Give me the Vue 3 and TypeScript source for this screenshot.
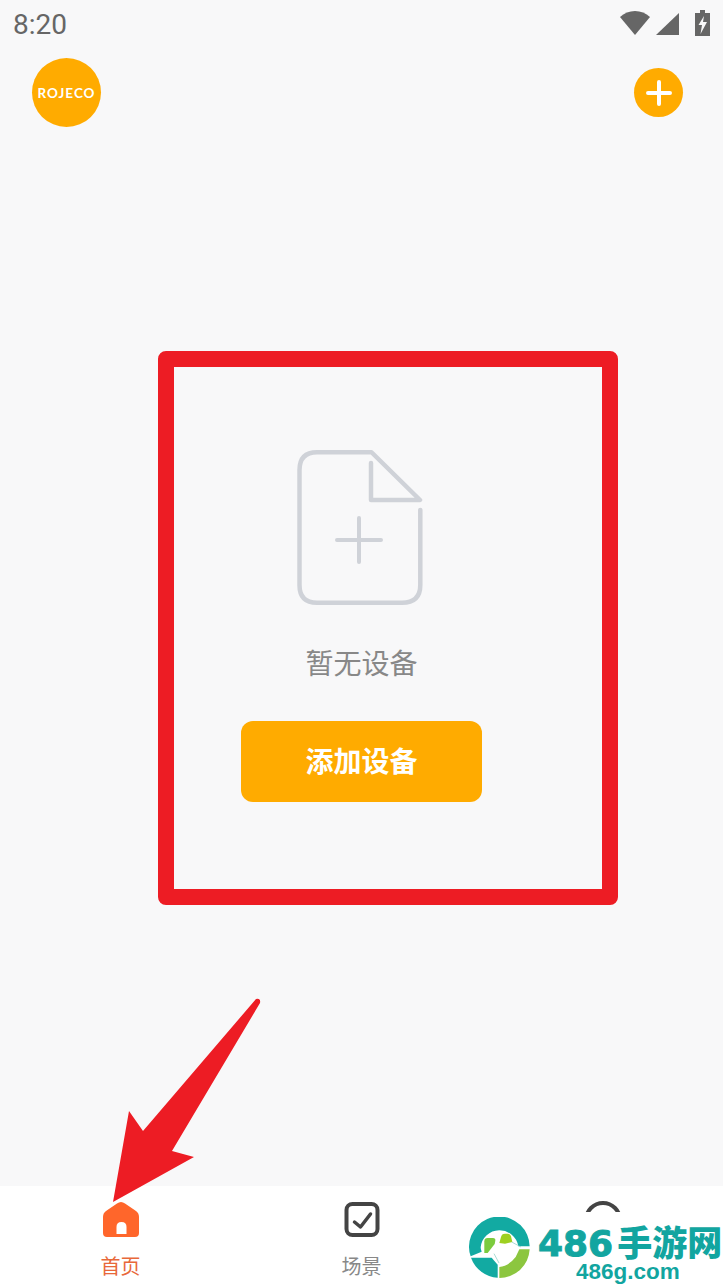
<template>
  <div class="page">
    <div class="status-bar">
      <span class="time">8:20</span>
      <div class="status-icons">
        <svg width="30" height="24" viewBox="0 0 30 24">
          <path d="M0 6 C8 -2 22 -2 30 6 L15 24 Z" fill="#666" />
        </svg>
        <svg width="23" height="22" viewBox="0 0 23 22">
          <path d="M23 0 V22 H0 Z" fill="#666" />
        </svg>
        <svg width="15" height="26" viewBox="0 0 15 26">
          <path d="M5 0 H10 V3 H15 V26 H0 V3 H5 Z M9 6 L3.500 15 H7 L5.500 24 L12 12 H8 Z" fill="#666" fill-rule="evenodd" />
        </svg>
      </div>
    </div>

    <header class="top-bar">
      <div class="logo">ROJECO</div>
      <button class="add-round">
        <svg width="26" height="26" viewBox="0 0 26 26">
          <path d="M13 2 V24 M2 13 H24" stroke="#fff" stroke-width="4" stroke-linecap="round" />
        </svg>
      </button>
    </header>

    <main class="content">
      <svg class="empty-icon" width="133" height="160" viewBox="0 0 133 160" fill="none">
        <path
          d="M125.300 62 V137 Q125.300 154.750 107 154.750 H22 Q4.500 154.750 4.500 137 V22 Q4.500 4.250 22 4.250 H76.500 L125 52 H76 V15"
          stroke="#cfd2d8"
          stroke-width="4.500"
          stroke-linecap="round"
          stroke-linejoin="round"
        />
        <path d="M42 92 H86 M64 70 V114" stroke="#cfd2d8" stroke-width="4" stroke-linecap="round" />
      </svg>
      <p class="empty-text">暂无设备</p>
      <button class="add-btn">添加设备</button>
    </main>

    <nav class="tab-bar">
      <div v-for="tab in tabs" :key="tab.icon" class="tab" :class="{ active: tab.active }">
        <svg width="40" height="40" viewBox="0 0 40 40">
          <template v-if="tab.icon === 'home'">
            <path
              d="M20 2 Q22 2 24 3.500 L35 11 Q38 13 38 17 V33 Q38 37 34 37 H6 Q2 37 2 33 V17 Q2 13 5 11 L16 3.500 Q18 2 20 2 Z"
              fill="#ff662b"
            />
            <path d="M15.500 34 V27 Q15.500 22 20.500 22 Q25.500 22 25.500 27 V34 Z" fill="#fff" />
          </template>
          <template v-else-if="tab.icon === 'check'">
            <rect x="4.500" y="4" width="31" height="31" rx="6" fill="none" stroke="#444" stroke-width="4" />
            <path d="M12.500 22 L18.500 27 L28.500 14" fill="none" stroke="#444" stroke-width="3.500" stroke-linecap="round" stroke-linejoin="round" />
          </template>
          <template v-else>
            <circle cx="20" cy="20" r="17" fill="none" stroke="#444" stroke-width="4" />
          </template>
        </svg>
        <span v-if="tab.label" class="tab-label">{{ tab.label }}</span>
      </div>
    </nav>

    <!-- annotations drawn over the screenshot -->
    <div class="red-box"></div>
    <svg class="arrow" width="723" height="1286" viewBox="0 0 723 1286">
      <path
        d="M113 1202 L129 1111 L143 1131 L256 999 Q261 998 260 1003 L172 1151 L194 1157 Z"
        fill="#ed1c24"
      />
    </svg>

    <div class="watermark">
      <svg class="wm-logo" width="61" height="61" viewBox="22 22 183 183">
        <path d="M22 113 A91 91 0 0 1 204 110 H170 A57 57 0 0 0 57 113 Q57 120 60 126 L27 140 Q22 127 22 113 Z" fill="#12aaa2" />
        <path d="M28 144 H90 L108 165 V204 A91 91 0 0 1 28 144 Z" fill="#12aaa2" />
        <path d="M204 119 A91 91 0 0 1 113 205 V172 Q140 170 162 142 L173 119 Z" fill="#8cc63f" />
        <path d="M68 95 Q68 85 78 85 H94 Q102 85 101 93 L99 103 L78 130 L68 130 Z" fill="#7ccb3e" />
        <path d="M118 82 Q120 72 130 72 H138 Q146 72 148 80 L152 97 L130 102 L113 100 Z" fill="#9ed021" />
        <path d="M150 97 L178 112 M97 132 L112 160" stroke="#7fc9c0" stroke-width="2" fill="none" />
      </svg>
      <div class="wm-text">
        <div class="wm-name"><span class="wm-num">486</span><span class="wm-cn">手游网</span></div>
        <div class="wm-url">486g.com</div>
      </div>
    </div>
  </div>
</template>

<script setup lang="ts">
interface Tab {
  label: string;
  icon: string;
  active?: boolean;
}

// the third tab's label is hidden by the watermark in the screenshot
const tabs: Tab[] = [
  { label: '首页', icon: 'home', active: true },
  { label: '场景', icon: 'check' },
  { label: '', icon: 'user' }
];
</script>

<style>
body {
  background: #f8f8f9;
}
</style>

<style scoped>
.page {
  position: relative;
  width: 723px;
  height: 1286px;
  overflow: hidden;
  display: flex;
  flex-direction: column;
  background: #f8f8f9;
  font-family: "Noto Sans", "Noto Sans CJK SC", sans-serif;
}

.status-bar {
  height: 50px;
  padding: 0 13px;
  display: flex;
  align-items: flex-start;
  justify-content: space-between;
}

.time {
  font-family: Roboto, sans-serif;
  font-size: 28px;
  line-height: 50px;
  color: #666;
}

.status-icons {
  display: flex;
  align-items: flex-end;
  gap: 6px;
  height: 36px;
}

.status-icons svg:first-child {
  margin-bottom: 1px;
}

.status-icons svg:nth-child(2) {
  margin-bottom: 1px;
}

.status-icons svg:last-child {
  margin-left: 10px;
}

.top-bar {
  height: 85px;
  box-sizing: border-box;
  padding: 8px 40px 0 32px;
  display: flex;
  align-items: flex-start;
  justify-content: space-between;
}

.logo {
  width: 69px;
  height: 69px;
  border-radius: 50%;
  background: #ffab00;
  color: #fff;
  display: flex;
  align-items: center;
  justify-content: center;
  font-family: Lato, sans-serif;
  font-size: 13.500px;
  font-weight: 700;
  letter-spacing: 1px;
}

.add-round {
  width: 49px;
  height: 49px;
  margin-top: 10px;
  padding: 0;
  border: none;
  border-radius: 50%;
  background: #ffab00;
  display: flex;
  align-items: center;
  justify-content: center;
}

.content {
  flex: 1;
  padding-top: 313px;
  display: flex;
  flex-direction: column;
  align-items: center;
}

.empty-icon {
  display: block;
}

.empty-text {
  margin: 35px 0 0;
  font-size: 28px;
  line-height: 40px;
  color: #888;
}

.add-btn {
  width: 241px;
  height: 81px;
  margin-top: 38px;
  padding: 0 0 4px;
  border: none;
  border-radius: 12px;
  background: #ffab00;
  color: #fff;
  font-family: "Noto Sans CJK SC", sans-serif;
  font-size: 28px;
  font-weight: 700;
}

.tab-bar {
  height: 100px;
  background: #fff;
  display: grid;
  grid-template-columns: repeat(3, 241px);
}

.tab {
  padding-top: 14px;
  display: flex;
  flex-direction: column;
  align-items: center;
}

.tab svg {
  display: block;
}

.tab-label {
  margin-top: 12px;
  font-size: 20px;
  line-height: 30px;
  color: #888;
}

.tab.active .tab-label {
  color: #e8683a;
}

.red-box {
  position: absolute;
  left: 158px;
  top: 351px;
  width: 460px;
  height: 554px;
  box-sizing: border-box;
  border: 16px solid #ed1c24;
  border-radius: 8px;
}

.arrow {
  position: absolute;
  left: 0;
  top: 0;
  pointer-events: none;
}

.watermark {
  position: absolute;
  left: 468px;
  right: 0;
  bottom: 0;
  height: 74px;
  padding-left: 1px;
  background: #fff;
  display: flex;
  align-items: flex-start;
  gap: 8px;
}

.wm-logo {
  flex: none;
  margin-top: 5px;
}

.wm-text {
  flex: 1;
  color: #12a5a0;
  font-weight: 700;
}

.wm-name {
  margin-top: 9px;
  height: 40px;
  line-height: 40px;
  white-space: nowrap;
}

.wm-num {
  font-family: "DejaVu Sans", sans-serif;
  font-size: 36px;
  -webkit-text-stroke: 1px #12a5a0;
}

.wm-cn {
  margin-left: 4px;
  font-family: "Noto Sans CJK SC", sans-serif;
  font-size: 35px;
  font-weight: 900;
}

.wm-url {
  padding-left: 38px;
  font-family: "Liberation Sans", sans-serif;
  font-size: 22.500px;
  line-height: 22px;
}
</style>
